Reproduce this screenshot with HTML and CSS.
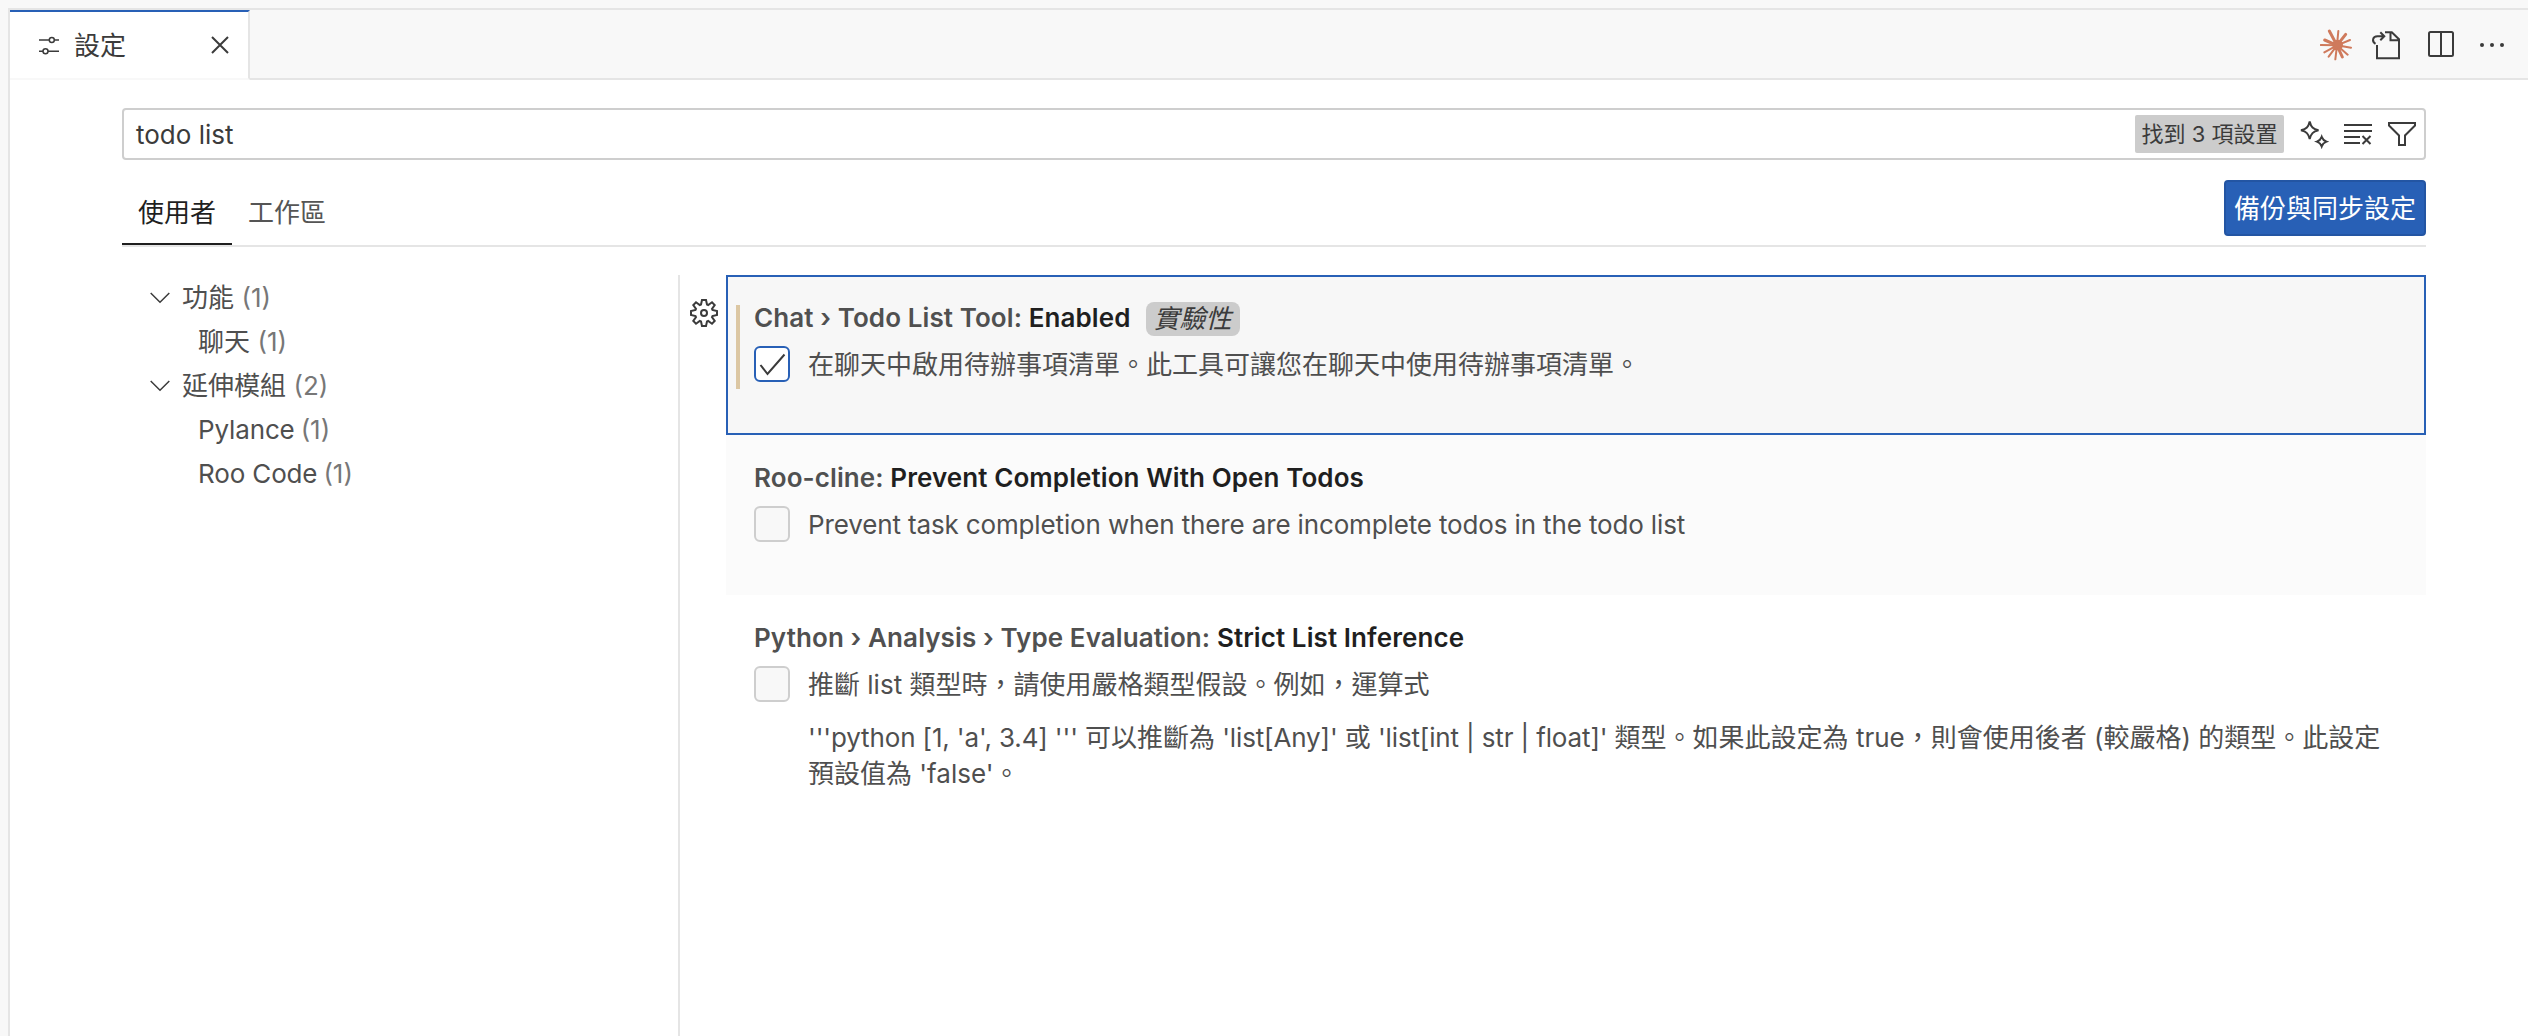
FILE: index.html
```html
<!DOCTYPE html>
<html lang="zh-Hant">
<head>
<meta charset="utf-8">
<title>設定</title>
<link rel="stylesheet" href="styles.css">
</head>
<body>
<div class="window">
  <header class="tabbar">
    <div class="tab">
      <svg class="tab-icon" width="24" height="24" viewBox="0 0 24 24"><path d="M2 7h10.300M17.500 7H22M2 18.200h4M11 18.200h11"/><circle cx="14.800" cy="7" r="2.500"/><circle cx="8.500" cy="18.200" r="2.500"/></svg>
      <span class="tab-title">設定</span>
      <svg class="tab-close" width="18" height="18" viewBox="0 0 18 18"><path d="M1 1l16 16M17 1L1 17"/></svg>
    </div>
    <div class="actions">
      <svg width="34" height="34" viewBox="0 0 102 102" class="spark"><path class="thick" d="M51 52L28 9M51 52L77 19M51 52L14 36M51 52L67 87"/><path d="M51 52L55 9M51 52L90 36M51 52L93 59M51 52L83 80M51 52L46 94M51 52L26 86M51 52L13 73M51 52L2 51"/><circle cx="53" cy="51" r="13"/></svg>
      <svg width="32" height="32" viewBox="0 0 32 32" class="line"><path d="M7 17v13.200h22V11.200L21.800 4.200H15M20.500 4.200v8H29M5.500 15.800C1.500 13.500 2.500 8.200 7.500 8.200H13M10.300 4.200L14.300 8.200L10.300 12.200"/></svg>
      <svg width="28" height="28" viewBox="0 0 28 28" class="line"><rect x="2" y="2" width="24" height="24" rx="1.500"/><path d="M14 2v24"/></svg>
      <svg width="24" height="6" viewBox="0 0 24 6" class="dots"><circle cx="2" cy="3" r="2"/><circle cx="12" cy="3" r="2"/><circle cx="22" cy="3" r="2"/></svg>
    </div>
  </header>
  <main class="editor">
    <div class="search">
      <span class="query">todo list</span>
      <span class="count">找到 3 項設置</span>
      <svg class="line" width="30" height="30" viewBox="0 0 30 30"><path d="M10.700 2.500C12 8 14 10 19.500 11.300C14 12.600 12 14.600 10.700 20C9.400 14.600 7.400 12.600 2 11.300C7.400 10 9.400 8 10.700 2.500ZM22.700 17.800Q24 21.300 27.500 22.600Q24 23.900 22.700 27.400Q21.400 23.900 17.900 22.600Q21.400 21.300 22.700 17.800Z"/></svg>
      <svg class="line" width="28" height="22" viewBox="0 0 28 22"><path d="M0 2h28M0 8h28M0 14h16M0 20h16M18.500 13l8 8M26.500 13l-8 8"/></svg>
      <svg class="line" width="30" height="26" viewBox="0 0 30 26"><path d="M2 2H28V4.500L18 14.500V24H12V14.500L2 4.500Z"/></svg>
    </div>
    <div class="scope">
      <nav class="scope-tabs"><span class="scope-tab active">使用者</span><span class="scope-tab">工作區</span></nav>
      <button class="sync">備份與同步設定</button>
    </div>
    <div class="content">
      <aside class="toc">
        <div class="node"><svg class="chev" width="20" height="12" viewBox="0 0 20 12"><path d="M.7 1l9.300 9.300L19.300 1"/></svg>功能<span class="num">(1)</span></div>
        <div class="node leaf">聊天<span class="num">(1)</span></div>
        <div class="node"><svg class="chev" width="20" height="12" viewBox="0 0 20 12"><path d="M.7 1l9.300 9.300L19.300 1"/></svg>延伸模組<span class="num">(2)</span></div>
        <div class="node leaf"><span class="latin">Pylance</span><span class="num">(1)</span></div>
        <div class="node leaf"><span class="latin">Roo Code</span><span class="num">(1)</span></div>
      </aside>
      <div class="gutter">
        <svg class="gear" width="30" height="30" viewBox="-15 -15 30 30"><path d="M-2 -13H2L3 -8.500L4.200 -8L8 -10.700L10.700 -8L8 -4.200L8.500 -3L13 -2V2L8.500 3L8 4.200L10.700 8L8 10.700L4.200 8L3 8.500L2 13H-2L-3 8.500L-4.200 8L-8 10.700L-10.700 8L-8 4.200L-8.500 3L-13 2V-2L-8.500 -3L-8 -4.200L-10.700 -8L-8 -10.700L-4.200 -8L-3 -8.500Z"/><circle r="3"/></svg>
      </div>
      <div class="list">
        <section class="setting focused">
          <div class="modified"></div>
          <h2 class="title">Chat › Todo List Tool: <b>Enabled</b><span class="tag">實驗性</span></h2>
          <div class="value">
            <span class="check on"><svg width="32" height="32" viewBox="0 0 32 32"><path d="M4.500 17L11.500 26L28.500 6.500"/></svg></span>
            <div class="desc"><p>在聊天中啟用待辦事項清單。此工具可讓您在聊天中使用待辦事項清單。</p></div>
          </div>
        </section>
        <section class="setting hovered">
          <h2 class="title">Roo-cline: <b>Prevent Completion With Open Todos</b></h2>
          <div class="value">
            <span class="check"></span>
            <div class="desc"><p class="latin">Prevent task completion when there are incomplete todos in the todo list</p></div>
          </div>
        </section>
        <section class="setting">
          <h2 class="title">Python › Analysis › Type Evaluation: <b>Strict List Inference</b></h2>
          <div class="value">
            <span class="check"></span>
            <div class="desc">
              <p>推斷 list 類型時，請使用嚴格類型假設。例如，運算式</p>
              <p><span class="latin">'''python [1, 'a', 3.4] ''' </span>可以推斷為<span class="latin"> 'list[Any]' </span>或<span class="latin"> 'list[int | str | float]' </span>類型。如果此設定為 true，則會使用後者 (較嚴格) 的類型。此設定<br>預設值為 'false'。</p>
            </div>
          </div>
        </section>
      </div>
    </div>
  </main>
</div>
</body>
</html>
```
FILE: styles.css
```css
* { box-sizing: border-box; }

body {
  margin: 0;
  background: #f8f8f8;
  color: #3b3b3b;
  font: 26px/36px Inter, "Noto Sans CJK TC", sans-serif;
}

svg { display: block; flex: none; fill: none; stroke: #3b3b3b; stroke-width: 2; }

.window {
  height: 1028px;
  margin: 8px 0 0 8px;
  border-top: 2px solid #e5e5e5;
  border-left: 2px solid #e5e5e5;
  background: #fff;
  overflow: hidden;
}

.latin { letter-spacing: -0.14px; }

.tabbar {
  display: flex;
  justify-content: space-between;
  height: 70px;
  background: linear-gradient(#e5e5e5, #e5e5e5) bottom / 100% 2px no-repeat #f8f8f8;
}

.tab {
  display: flex;
  align-items: center;
  width: 240px;
  padding: 0 19px 0 27px;
  border-top: 2px solid #2860b6;
  border-right: 2px solid #e5e5e5;
  border-bottom: 2px solid #f8f8f8;
  background: #fff;
}

.tab-icon { stroke-width: 1.5; }
.tab-title { margin-left: 13px; padding-top: 2px; }
.tab-close { margin-left: auto; }

.actions { display: flex; align-items: center; padding-right: 24px; }
.actions .line { margin-bottom: 2px; }
.actions .line + .line { margin-left: 25px; }
.spark { margin-right: 16px; fill: #cf7a5c; stroke: #cf7a5c; stroke-width: 6; stroke-linecap: round; }
.spark .thick { stroke-width: 9; }
.dots { margin-left: 25px; fill: #3b3b3b; stroke: none; }

.editor { padding: 28px 102px 0 112px; }

.search {
  display: flex;
  align-items: center;
  height: 52px;
  padding: 0 7px 0 12px;
  border: 2px solid #cecece;
  border-radius: 4px;
}

.query { margin-right: auto; padding-top: 2px; }

.count {
  margin-right: 15px;
  padding: 0 6.5px;
  border-radius: 2px;
  background: #ccc;
  font-size: 22px;
  line-height: 38px;
}

.search .line + .line { margin-left: 15px; }

.scope {
  display: flex;
  justify-content: space-between;
  height: 87px;
  padding-top: 20px;
  border-bottom: 2px solid #e5e5e5;
}

.scope-tabs { display: flex; }

.scope-tab { height: 65px; padding: 15px 16px 0; color: #555; }

.scope-tab.active { border-bottom: 2px solid #1f1f1f; color: #1f1f1f; }

.sync {
  height: 56px;
  padding: 2px 8px 0;
  border: 2px solid #2355a3;
  border-radius: 4px;
  background: #2860b6;
  color: #fff;
  font: inherit;
}

.content { display: flex; padding-top: 28px; }

.toc {
  flex: none;
  width: 558px;
  height: 761px;
  border-right: 2px solid #e5e5e5;
  padding-top: 1px;
  color: #4f4f4f;
}

.node { display: flex; align-items: center; height: 44px; padding-left: 28px; line-height: 44px; }

.leaf { padding-left: 76px; }

.chev { margin-right: 12px; stroke-width: 1.5; }

.num { margin-left: 7.5px; color: #777; }

.latin + .num { margin-left: 6px; }

.gutter { flex: none; width: 46px; padding: 23px 0 0 9px; }

.list { flex: 1; min-width: 0; }

.setting { position: relative; height: 160px; padding: 25px 38px 0 28px; }

.setting:last-child { height: auto; }

.focused { background: #f7f7f7; box-shadow: inset 0 0 0 2px #2860b6; }

.hovered { background: #fbfbfb; }

.modified { position: absolute; left: 10px; top: 30px; width: 4px; height: 84px; background: #dcc7a3; }

.title {
  display: flex;
  height: 46px;
  margin: 0;
  color: #505050;
  font-size: 26px;
  font-weight: 600;
  letter-spacing: 0.09px;
  white-space: pre;
}

.title b { color: #1f1f1f; font-weight: 600; }

.tag {
  height: 34px;
  margin: 2px 0 0 15px;
  padding: 0 8px;
  border-radius: 8px;
  background: #ccc;
  color: #3b3b3b;
  font-style: italic;
  font-weight: 400;
  letter-spacing: 0;
  line-height: 34px;
}

.value { display: flex; gap: 18px; color: #4f4f4f; }

.check { flex: none; width: 36px; height: 36px; border: 2px solid #cecece; border-radius: 6px; background: #f8f8f8; }

.check.on { border-color: #2860b6; background: #fff; }

.desc { padding-top: 1px; }

.desc p { margin: 0 0 17px; white-space: nowrap; }
```
